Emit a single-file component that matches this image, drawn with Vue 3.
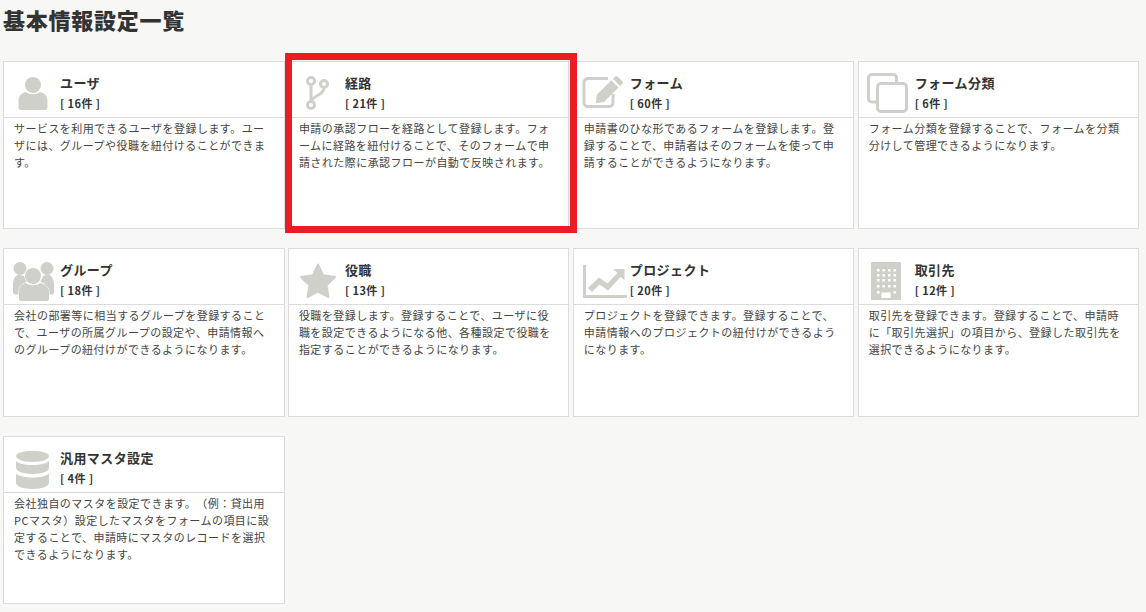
<script setup>
const cards = [
  { key: 'user', title: 'ユーザ', count: '[ 16件 ]', desc: 'サービスを利用できるユーザを登録します。ユーザには、グループや役職を紐付けることができます。' },
  { key: 'route', title: '経路', count: '[ 21件 ]', desc: '申請の承認フローを経路として登録します。フォームに経路を紐付けることで、そのフォームで申請された際に承認フローが自動で反映されます。' },
  { key: 'form', title: 'フォーム', count: '[ 60件 ]', desc: '申請書のひな形であるフォームを登録します。登録することで、申請者はそのフォームを使って申請することができるようになります。' },
  { key: 'copy', title: 'フォーム分類', count: '[ 6件 ]', desc: 'フォーム分類を登録することで、フォームを分類分けして管理できるようになります。' },
  { key: 'group', title: 'グループ', count: '[ 18件 ]', desc: '会社の部署等に相当するグループを登録することで、ユーザの所属グループの設定や、申請情報へのグループの紐付けができるようになります。' },
  { key: 'star', title: '役職', count: '[ 13件 ]', desc: '役職を登録します。登録することで、ユーザに役職を設定できるようになる他、各種設定で役職を指定することができるようになります。' },
  { key: 'chart', title: 'プロジェクト', count: '[ 20件 ]', desc: 'プロジェクトを登録できます。登録することで、申請情報へのプロジェクトの紐付けができるようになります。' },
  { key: 'building', title: '取引先', count: '[ 12件 ]', desc: '取引先を登録できます。登録することで、申請時に「取引先選択」の項目から、登録した取引先を選択できるようになります。' },
  { key: 'db', title: '汎用マスタ設定', count: '[ 4件 ]', desc: '会社独自のマスタを設定できます。（例：貸出用PCマスタ）設定したマスタをフォームの項目に設定することで、申請時にマスタのレコードを選択できるようになります。' },
]
const windows = []
for (const y of [9, 14, 19, 25, 31]) {
  for (const x of [10, 15.5, 21, 26.5]) {
    if (y === 31 && (x === 15.5 || x === 21)) continue
    windows.push({ x, y })
  }
}
</script>

<template>
  <div class="page">
    <h1 class="heading">基本情報設定一覧</h1>
    <div class="grid">
      <section v-for="c in cards" :key="c.key" class="card">
        <header class="card-head">
          <svg class="icon" viewBox="0 0 48 44" width="48" height="44" aria-hidden="true">
            <template v-if="c.key === 'user'">
              <circle class="fill" cx="21" cy="12" r="8" />
              <path class="fill" d="M9 37c-1.500 0-2.500-1-2.500-2.500V28c0-5 3.500-8.500 7.500-9 2 1.500 4.500 2.200 7 2.200s5-.7 7-2.200c4 .5 7.500 4 7.500 9v6.500c0 1.500-1 2.500-2.500 2.500z" />
            </template>
            <template v-else-if="c.key === 'route'">
              <path class="line" d="M14 12v16M27 15c0 8-13 7-13 15" />
              <circle class="ring" cx="14" cy="8" r="3.500" />
              <circle class="ring" cx="27" cy="11" r="3.500" />
              <circle class="ring" cx="14" cy="32" r="3.500" />
            </template>
            <template v-else-if="c.key === 'form'">
              <path class="line" d="M26 5.500H6a4 4 0 0 0-4 4v20a4 4 0 0 0 4 4h21a4 4 0 0 0 4-4V21" />
              <path class="fill" d="M35.500 3.500l4.800 4.800c.8.8.8 1.600 0 2.400l-2.200 2.200-7.200-7.200 2.200-2.200c.8-.8 1.600-.8 2.400 0zM29.300 7.300l7.200 7.200-14.500 14.500-8.300 1.200 1.100-8.400z" />
            </template>
            <template v-else-if="c.key === 'copy'">
              <path class="line" d="M9 29H5a3.500 3.500 0 0 1-3.500-3.500V5A3.500 3.500 0 0 1 5 1.500h21A3.500 3.500 0 0 1 29.500 5v5" />
              <rect class="line" x="10.500" y="10.500" width="29" height="28" rx="3.500" />
            </template>
            <template v-else-if="c.key === 'group'">
              <circle class="fill" cx="8" cy="8.500" r="6.500" />
              <circle class="fill" cx="35" cy="8.500" r="6.500" />
              <path class="fill" d="M1 32v-8c0-5 3-9 6-9.500 1.500 1 3.500 1.500 5 1 .5 3 2 5 3 6-5 2-8 6-8 11v2H3c-1 0-2-1-2-2.500zM42 32v-8c0-5-3-9-6-9.500-1.500 1-3.500 1.500-5 1-.5 3-2 5-3 6 5 2 8 6 8 11v2h4c1 0 2-1 2-2.500z" />
              <circle class="fill cut" cx="21" cy="16" r="8" />
              <path class="fill cut" d="M9 41c-1 0-2-.8-2-2v-7c0-5 3-8.500 7-9 2 1.500 4.500 2.200 7 2.200s5-.7 7-2.200c4 .5 9 4 9 9v7c0 1.200-1 2-2 2z" />
            </template>
            <template v-else-if="c.key === 'star'">
              <path class="fill star" d="M21 4.500l5.200 10.800 11.800 1.700-8.500 8.300 2 11.700L21 31.500 10.500 37l2-11.700L4 17l11.800-1.700z" />
            </template>
            <template v-else-if="c.key === 'chart'">
              <path class="fill" d="M1 5h3v30h41v3H1z" />
              <path class="fill" d="M6 28l11-10.500 8.500 6L35.500 13l-4.500-4h11.500v11.500l-3.800-3.800L26 30.500l-8.500-6-7.500 7.500z" />
            </template>
            <template v-else-if="c.key === 'building'">
              <rect class="fill" x="4" y="2" width="30" height="38" rx="1" />
              <rect v-for="(w, i) in windows" :key="i" class="hole" :x="w.x" :y="w.y" width="2.500" height="2.500" />
              <rect class="hole" x="14.500" y="32.500" width="9" height="5.500" />
            </template>
            <template v-else>
              <path class="fill" d="M4 8c0-3 7-5 16.500-5S37 5 37 8s-7 6-16.500 6S4 11 4 8z" />
              <path class="fill" d="M4 13c3 2.800 9 4 16.500 4S34 15.800 37 13v7c0 3-7 6-16.500 6S4 23 4 20z" />
              <path class="fill" d="M4 25.500c3 2.800 9 4 16.500 4s13.500-1.200 16.500-4V35c0 3-7 6-16.500 6S4 38 4 35z" />
            </template>
          </svg>
          <div class="head-text">
            <div class="title">{{ c.title }}</div>
            <div class="count">{{ c.count }}</div>
          </div>
        </header>
        <p class="desc">{{ c.desc }}</p>
      </section>
    </div>
    <div class="highlight"></div>
  </div>
</template>

<style>
html, body { background: #f7f7f5; }
</style>

<style scoped>
.page {
  position: relative;
  width: 1146px;
  height: 612px;
  overflow: hidden;
  background: #f7f7f5;
  font-family: "Noto Sans CJK JP", "Noto Sans", sans-serif;
  color: #333;
  box-sizing: border-box;
  padding: 0 6px 0 3px;
  text-spacing-trim: space-all;
}
.heading {
  margin: 0;
  height: 61px;
  box-sizing: border-box;
  padding-top: 3px;
  font-size: 22px;
  line-height: 32px;
  letter-spacing: 0.75px;
  font-weight: 900;
  color: #333;
}
.grid {
  display: grid;
  grid-template-columns: repeat(4, 281.5px);
  grid-auto-rows: 168.2px;
  column-gap: 3.4px;
  row-gap: 19.2px;
}
.card {
  background: #fff;
  border: 1px solid #dcdcdc;
  box-sizing: border-box;
  min-width: 0;
}
.card-head {
  display: flex;
  align-items: flex-start;
  height: 56px;
  box-sizing: border-box;
  padding: 11px 0 0 8px;
  border-bottom: 1px solid #dcdcdc;
}
.icon {
  flex: none;
  display: block;
}
.head-text {
  flex: 1;
  min-width: 0;
}
.title {
  font-size: 13px;
  line-height: 20px;
  letter-spacing: 0.42px;
  font-weight: 700;
  color: #333;
}
.count {
  font-size: 11px;
  line-height: 20px;
  letter-spacing: 0.45px;
  font-weight: 700;
  color: #333;
}
.desc {
  margin: 0;
  padding: 2px 10px 0 10px;
  font-size: 11px;
  line-height: 17px;
  letter-spacing: 0.46px;
  color: #444;
}
.fill { fill: #d0d0cb; }
.cut { stroke: #fff; stroke-width: 1; paint-order: stroke; }
.star { stroke: #d0d0cb; stroke-width: 2; stroke-linejoin: round; }
.line { fill: none; stroke: #d0d0cb; stroke-width: 3; }
.ring { fill: #fff; stroke: #d0d0cb; stroke-width: 3; }
.hole { fill: #fff; }
.highlight {
  position: absolute;
  left: 285px;
  top: 53px;
  width: 292px;
  height: 180px;
  box-sizing: border-box;
  border: 7px solid #ed1c24;
  pointer-events: none;
}
</style>
